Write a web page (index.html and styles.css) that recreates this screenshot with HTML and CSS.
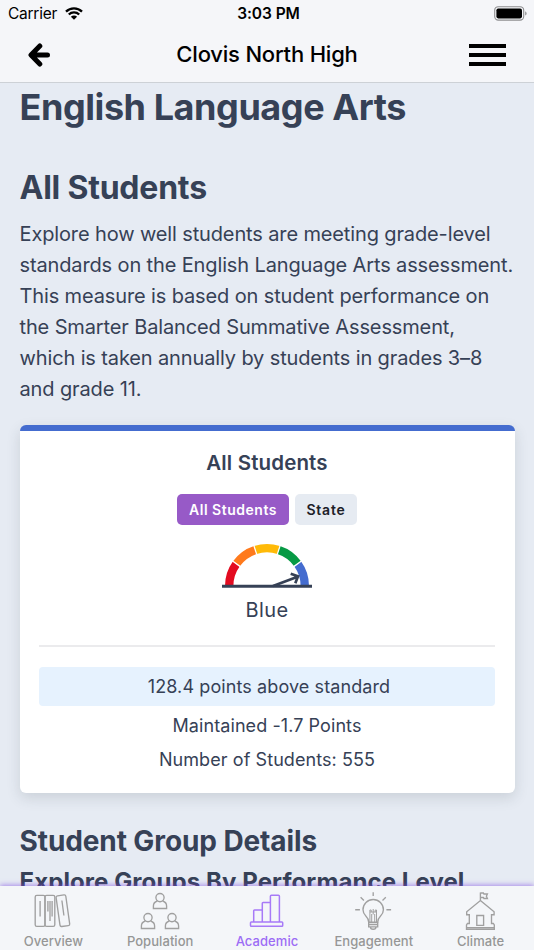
FILE: index.html
```html
<!DOCTYPE html>
<html lang="en">
<head>
<meta charset="utf-8">
<title>Clovis North High</title>
<link rel="stylesheet" href="styles.css">
</head>
<body>
<div class="phone">
  <header class="header">
    <div class="status">
      <div class="status-left">
        <span class="carrier">Carrier</span>
        <svg class="wifi" viewBox="0 0 18 13" width="18" height="13">
          <path d="M1 4.6a11.4 11.4 0 0 1 16 0M3.8 7.5a7.4 7.4 0 0 1 10.400 0" fill="none" stroke="#000" stroke-width="2.3"/>
          <path d="M9 12.800 5.900 9.700a4.400 4.400 0 0 1 6.200 0z"/>
        </svg>
      </div>
      <span class="time">3:03 PM</span>
      <svg class="battery" viewBox="0 0 34 15" width="34" height="15">
        <rect x=".7" y=".7" width="29" height="13.400" rx="3.600" fill="none" stroke="#8e8e90" stroke-width="1.100"/>
        <rect x="2.400" y="2.400" width="25.600" height="10" rx="1.800"/>
        <path d="M31.200 5.200c1.900.8 1.900 3.600 0 4.400z" fill="#8e8e90"/>
      </svg>
    </div>
    <div class="navbar">
      <svg class="back" viewBox="0 0 22 24" width="22" height="24">
        <path d="M11.800 3 3 12l8.800 9M4 12h15.500" fill="none" stroke="#000" stroke-width="5" stroke-linecap="round" stroke-linejoin="round"/>
      </svg>
      <span class="title">Clovis North High</span>
      <div class="menu"><i></i><i></i><i></i></div>
    </div>
  </header>

  <main class="content">
    <h1>English Language Arts</h1>
    <h2>All Students</h2>
    <p class="intro">Explore how well students are meeting grade-level<br>standards on the English Language Arts assessment.<br>This measure is based on student performance on<br>the Smarter Balanced Summative Assessment,<br>which is taken annually by students in grades 3–8<br>and grade 11.</p>

    <section class="card">
      <h3>All Students</h3>
      <div class="toggle">
        <span class="pill pill-active">All Students</span>
        <span class="pill pill-state">State</span>
      </div>
      <svg class="gauge" viewBox="222 543 90 46" width="90" height="46">
        <g fill="none" stroke-width="8.400">
          <path stroke="#e30b20" d="M229.200 586A37.800 37.800 0 0 1 236.420 563.780"/>
          <path stroke="#ff7a1c" d="M236.420 563.780A37.800 37.800 0 0 1 255.320 550.050"/>
          <path stroke="#ffba08" d="M255.320 550.050A37.800 37.800 0 0 1 278.680 550.050"/>
          <path stroke="#079a45" d="M278.680 550.050A37.800 37.800 0 0 1 297.580 563.780"/>
          <path stroke="#446ccf" d="M297.580 563.780A37.800 37.800 0 0 1 304.800 586"/>
        </g>
        <path stroke="#fff" stroke-width="1.300" d="M240.300 566.600 232.200 560.700M256.800 554.600 253.700 545.100M277.200 554.600 280.300 545.100M293.700 566.600 301.800 560.700"/>
        <path fill="none" stroke="#364156" stroke-width="2.700" d="M273 586 297.600 576.700M290.700 573.700 298 576.300 295.300 583.200"/>
        <path stroke="#364156" stroke-width="3" d="M222 586.200h90"/>
      </svg>
      <div class="level">Blue</div>
      <hr>
      <div class="points">128.4 points above standard</div>
      <div class="stat">Maintained -1.7 Points</div>
      <div class="stat stat-count">Number of Students: 555</div>
    </section>

    <h2 class="details">Student Group Details</h2>
    <h3 class="explore">Explore Groups By Performance Level</h3>
  </main>

  <nav class="tabs">
    <a class="tab">
      <svg viewBox="33.400 890 40 40">
        <rect x="35.600" y="895.400" width="9.800" height="31" rx="1.600"/>
        <rect x="45.400" y="895.400" width="9.800" height="31" rx="1.600"/>
        <rect x="58.400" y="895.200" width="9.800" height="31" rx="1.600" transform="rotate(-8 63.300 910.700)"/>
        <path d="M40.500 901v15.500M48.300 901v10.500M50.400 901v20M52.500 901v15.500M62.300 900.500l2 15"/>
      </svg>
      <span>Overview</span>
    </a>
    <a class="tab">
      <svg viewBox="140 890 40 40">
        <g id="person"><circle cx="160" cy="897.600" r="4.100"/><path d="M157.300 901c-2.500.8-3.900 2.500-3.900 5v2.500h13.200v-2.500c0-2.500-1.400-4.200-3.900-5"/></g>
        <use href="#person" x="-12" y="20"/>
        <use href="#person" x="12" y="20"/>
      </svg>
      <span>Population</span>
    </a>
    <a class="tab active">
      <svg viewBox="247 890 40 40">
        <path d="M253.700 922v-11.200q0-.8.8-.8h7.800M262.300 922v-18.700q0-.8.8-.8h7.300M270.400 922v-25.800q0-1 1-1h7q1 0 1 1V922"/>
        <rect x="250.500" y="922" width="32.200" height="4.300" rx=".8"/>
      </svg>
      <span>Academic</span>
    </a>
    <a class="tab">
      <svg viewBox="353.600 890 40 40">
        <path d="M368.300 922.200c0-3.200-1-4.400-2.700-6-2-1.900-3-4-3-6.500a10.200 10.200 0 0 1 20.400 0c0 2.500-1 4.600-3 6.500-1.700 1.600-2.700 2.800-2.700 6z"/>
        <path d="M368.300 922.200v4.600h9v-4.600M368.300 924.500h9M370 927c0 3 5.600 3 5.600 0M372.800 892.300v3.700M354.800 909.700h4.700M386 909.700h4.700M360.200 897.300l3.300 3.200M385.400 897.300l-3.300 3.200"/>
        <path stroke-width="1" d="M369.500 922v-12h1.300v2M376.100 922v-12h-1.300v2M372.800 909v5.500M369.500 912h6.600M371.300 922v-8M374.300 922v-8"/>
      </svg>
      <span>Engagement</span>
    </a>
    <a class="tab">
      <svg viewBox="460.900 890 40 40">
        <path d="M480.300 900.500v-8M480.300 893h3l.5 1h3.500l-1 2.300 1 2.200h-3.500l-.5-1h-3M480.300 900.500l13.700 11.300v2.900h-2.600v8.800h1.800l1 1.500v4.200h-27.800V925l1-1.500h1.800v-8.800h-2.600v-2.900z"/>
        <path d="M466.400 927.700h27.800M476.700 915.500h6.800v9.800h-6.800z"/>
      </svg>
      <span>Climate</span>
    </a>
  </nav>
</div>
</body>
</html>
```
FILE: styles.css
```css
* { box-sizing: border-box; }
body {
  margin: 0;
  font-family: Inter, "Liberation Sans", sans-serif;
  color: #364156;
}
.phone {
  display: flex;
  flex-direction: column;
  width: 534px;
  height: 950px;
  overflow: hidden;
  background: #e6ebf3;
}
.header {
  flex: none;
  height: 83px;
  background: #f5f6f9;
  border-bottom: 1px solid #cdd1d6;
  color: #000;
}
.status {
  display: grid;
  grid-template-columns: 1fr auto 1fr;
  align-items: center;
  height: 27px;
  padding: 0 6px 0 8px;
}
.status-left { display: flex; align-items: center; gap: 8px; }
.carrier { font-size: 15.500px; line-height: 27px; letter-spacing: -.25px; }
.time { padding-left: 1px; font-size: 15.500px; font-weight: 600; line-height: 27px; letter-spacing: -.05px; }
.battery { justify-self: end; }
.navbar {
  display: grid;
  grid-template-columns: 1fr auto 1fr;
  align-items: center;
  height: 56px;
  padding: 0 28px;
}
.title { margin-top: -2px; font-size: 22px; font-weight: 500; letter-spacing: -.2px; }
.menu { justify-self: end; display: grid; gap: 5px; width: 37px; }
.menu i { height: 4px; background: #000; }
.content {
  flex: 1;
  min-height: 0;
  overflow: hidden;
  padding: 0 19.500px;
  white-space: nowrap;
}
h1, h2, h3, p { margin: 0; }
h1 { font-size: 36px; line-height: 48px; font-weight: 700; letter-spacing: -.43px; }
h2 { margin-top: 33px; font-size: 32px; line-height: 48px; font-weight: 700; letter-spacing: -.22px; }
.intro { margin-top: 7px; font-size: 20px; line-height: 31px; letter-spacing: -.13px; }
.card {
  margin-top: 20px;
  height: 368px;
  padding: 17px 19.500px 0;
  border-top: 6px solid #446ccf;
  border-radius: 6px;
  background: #fff;
  box-shadow: 0 5px 14px rgba(50, 60, 70, .15);
  text-align: center;
}
.card h3 { font-size: 20.500px; line-height: 30px; font-weight: 600; letter-spacing: .14px; }
.toggle { display: flex; justify-content: center; gap: 6px; margin-top: 16px; }
.pill {
  height: 31px;
  border-radius: 5px;
  background: #e6ebf2;
  color: #1c2028;
  font-size: 14px;
  font-weight: 600;
  line-height: 31px;
  letter-spacing: .52px;
}
.pill-active { width: 112px; background: #975ac7; color: #fff; }
.pill-state { width: 62px; letter-spacing: .8px; }
.gauge { display: block; margin: 18px auto 0; }
.level { margin-top: 6px; font-size: 20px; line-height: 30px; letter-spacing: .35px; }
hr { height: 2px; margin: 20px 0; border: 0; background: #ebebed; }
.points {
  height: 39px;
  padding-left: 4px;
  border-radius: 4px;
  background: #e6f2fe;
  font-size: 18px;
  line-height: 39px;
  letter-spacing: .1px;
}
.stat { font-size: 18px; line-height: 34px; margin-top: 3px; letter-spacing: .08px; }
.stat-count { margin-top: 0; }
.details { margin-top: 28px; font-size: 28px; line-height: 40px; letter-spacing: -.1px; }
.explore { margin-top: 5px; font-size: 24px; line-height: 32px; font-weight: 700; letter-spacing: .09px; }
.tabs {
  position: relative;
  flex: none;
  display: grid;
  grid-template-columns: repeat(5, 1fr);
  height: 64px;
  padding-top: 4px;
  background: #f4f6f9;
  box-shadow: 0 -1px 5px rgba(125, 70, 225, .6);
}
.tab { display: flex; flex-direction: column; align-items: center; color: #969696; }
.tab svg { width: 40px; height: 40px; fill: none; stroke: #a0a0a0; stroke-width: 1.350; }
.tab span { margin-top: 2px; font-size: 13px; font-weight: 500; line-height: 18px; letter-spacing: .06px; }
.tab.active { color: #9c6cf5; }
.tab.active svg { stroke: #a77af7; stroke-width: 1.500; }
```
